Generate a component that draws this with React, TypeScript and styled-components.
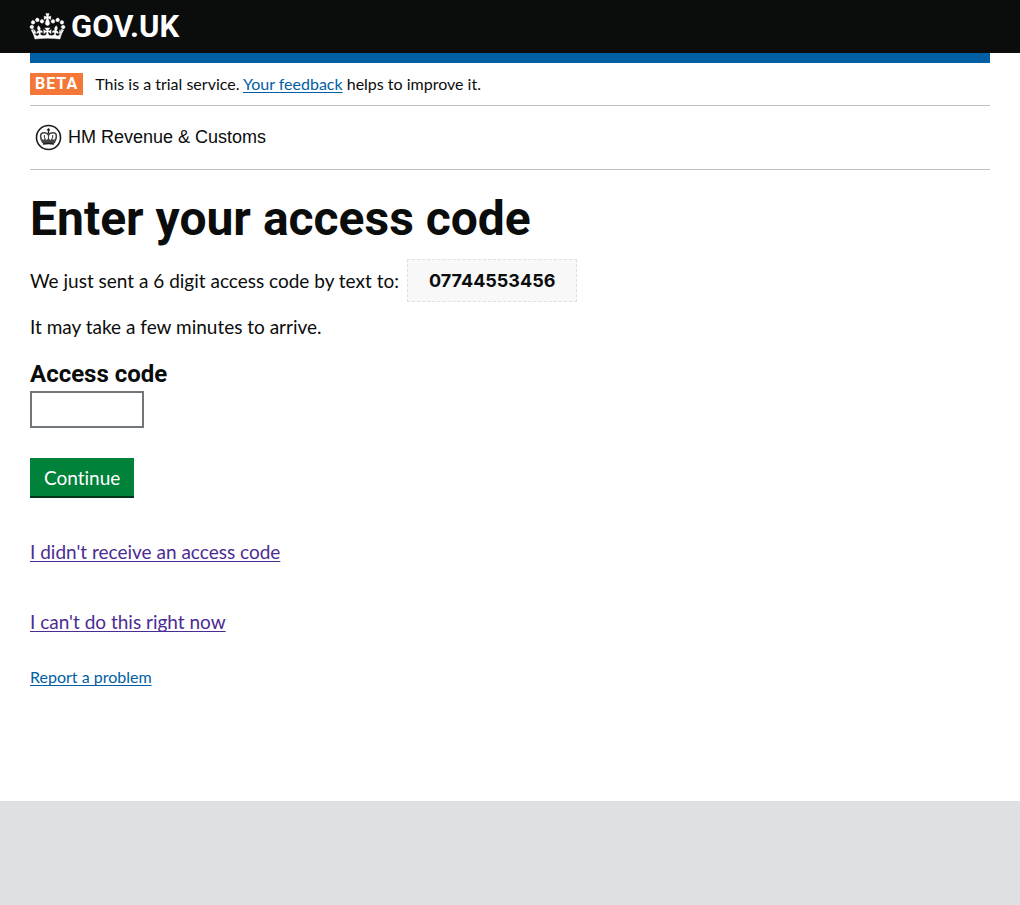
import React from "react";
import styled, { createGlobalStyle } from "styled-components";

const GlobalStyle = createGlobalStyle`
  *, *::before, *::after { box-sizing: border-box; }
  html { background: #dee0e2; }
  body {
    margin: 0;
    background: #dee0e2;
    color: #0b0c0c;
    font-family: Lato, "Liberation Sans", sans-serif;
    font-size: 19px;
    line-height: 25px;
    font-variant-ligatures: none;
  }
  h1, p { margin: 0; }
`;

const Container = styled.div`
  max-width: 960px;
  margin: 0 auto;
  @media (max-width: 1019px) {
    margin: 0 30px;
  }
`;

const Header = styled.header`
  background: #0b0c0c;
`;

const HeaderInner = styled(Container)`
  display: flex;
  align-items: center;
  height: 53px;
`;

const Logo = styled.a`
  display: inline-flex;
  align-items: center;
  gap: 6px;
  color: #fff;
  font-family: Roboto, sans-serif;
  font-size: 31px;
  font-weight: 700;
  line-height: 30px;
  text-decoration: none;
`;

const Content = styled.div`
  background: #fff;
  padding-bottom: 112px;
`;

const BlueBar = styled.div`
  height: 10px;
  background: #005ea5;
`;

const PhaseBanner = styled.div`
  display: flex;
  align-items: center;
  gap: 12px;
  padding: 10px 0;
  border-bottom: 1px solid #bfc1c3;
  font-size: 16px;
  line-height: 22px;
`;

const PhaseTag = styled.strong`
  padding: 0 5px;
  background: #f47738;
  color: #fff;
  font-family: Roboto, sans-serif;
  letter-spacing: 1px;
`;

const Link = styled.a<{ $visited?: boolean }>`
  color: ${(p) => (p.$visited ? "#4c2c92" : "#005ea5")};
  text-decoration: underline;
  text-decoration-thickness: 1px;
  text-underline-offset: 2px;
  text-decoration-skip-ink: none;
`;

const Organisation = styled.div`
  display: flex;
  align-items: center;
  gap: 6px;
  height: 64px;
  padding-left: 5px;
  border-bottom: 1px solid #bfc1c3;
  font-family: "Liberation Sans", Arial, sans-serif;
  font-size: 18px;
`;

const Title = styled.h1`
  padding: 24px 0 15px;
  font-family: Roboto, sans-serif;
  font-size: 48px;
  font-weight: 700;
  line-height: 50px;
`;

const SentLine = styled.p`
  display: flex;
  flex-wrap: wrap;
  align-items: center;
  gap: 8px;
`;

const PhoneNumber = styled.strong`
  padding: 8px 21px;
  border: 1px dashed #dee0e2;
  background: #f8f8f8;
  font-family: Inter, sans-serif;
  font-size: 18px;
`;

const Note = styled.p`
  padding: 12px 0 20px;
`;

const Form = styled.form`
  display: flex;
  flex-direction: column;
  align-items: flex-start;
`;

const Label = styled.label`
  padding-bottom: 2px;
  font-family: Roboto, sans-serif;
  font-size: 24px;
  font-weight: 700;
  line-height: 30px;
`;

const CodeInput = styled.input`
  width: 114px;
  height: 37px;
  margin-bottom: 30px;
  padding: 4px;
  border: 2px solid #6f777b;
  border-radius: 0;
  font: inherit;
`;

const Button = styled.button`
  height: 38px;
  margin-bottom: 43px;
  padding: 0 14px;
  border: 0;
  background: #00823b;
  box-shadow: 0 2px 0 #003618;
  color: #fff;
  font: inherit;
  cursor: pointer;
`;

const HelpLinks = styled.div`
  display: flex;
  flex-direction: column;
  align-items: flex-start;
  gap: 45px;
`;

const Report = styled.p`
  padding-top: 30px;
  font-size: 16px;
`;

const CROWN =
  "M25 30.2c3.5 1.5 7.7-.2 9.1-3.7 1.5-3.6-.2-7.8-3.9-9.2-3.6-1.4-7.6.3-9.1 3.9-1.4 3.5.3 7.5 3.9 9zM9 39.5c3.6 1.5 7.8-.2 9.2-3.7 1.5-3.6-.2-7.8-3.9-9.1-3.6-1.5-7.6.2-9.1 3.8-1.4 3.5.3 7.5 3.8 9zM4.4 57.2c3.5 1.5 7.7-.2 9.1-3.8 1.5-3.6-.2-7.7-3.9-9.1-3.5-1.5-7.6.3-9.1 3.8-1.4 3.5.3 7.6 3.9 9.1zm38.3-21.4c3.5 1.5 7.7-.2 9.1-3.8 1.5-3.6-.2-7.7-3.9-9.1-3.6-1.5-7.6.3-9.1 3.8-1.3 3.6.4 7.7 3.9 9.1zm64.4-5.6c-3.6 1.5-7.8-.2-9.1-3.7-1.5-3.6.2-7.8 3.8-9.2 3.6-1.4 7.7.3 9.2 3.9 1.3 3.5-.4 7.5-3.9 9zm15.9 9.3c-3.6 1.5-7.7-.2-9.1-3.7-1.5-3.6.2-7.8 3.7-9.1 3.6-1.5 7.7.2 9.2 3.8 1.5 3.5-.3 7.5-3.8 9zm4.7 17.7c-3.6 1.5-7.8-.2-9.2-3.8-1.5-3.6.2-7.7 3.9-9.1 3.6-1.5 7.7.3 9.2 3.8 1.3 3.5-.4 7.6-3.9 9.1zM89.3 35.8c-3.6 1.5-7.8-.2-9.2-3.8-1.4-3.6.2-7.7 3.9-9.1 3.6-1.5 7.7.3 9.2 3.8 1.4 3.6-.3 7.7-3.9 9.1zM69.7 17.7l8.9 4.7V9.3l-8.9 2.8c-.2-.3-.5-.6-.9-.9L72.4 0H59.6l3.5 11.2c-.3.3-.6.5-.9.9l-8.8-2.8v13.1l8.8-4.7c.3.3.6.7.9.9l-5 15.4v.1c-.2.8-.4 1.6-.4 2.4 0 4.1 3.1 7.5 7 8.1h.2c.3 0 .7.1 1 .1.4 0 .7 0 1-.1h.2c4-.6 7.1-4.1 7.1-8.1 0-.8-.1-1.7-.4-2.4V34l-5.1-15.4c.4-.2.7-.6 1-.9zM66 92.8c16.9 0 32.8 1.1 47.1 3.2 4-16.9 8.9-26.7 14-33.5l-9.6-3.4c1 4.9 1.1 7.2 0 10.2-1.5-1.4-3-4.3-4.2-8.7L108.6 76c2.8-2 5-3.2 7.5-3.3-4.4 9.4-10 11.9-13.6 11.2-4.3-.8-6.3-4.6-5.6-7.9 1-4.7 5.7-5.9 8-.5 4.3-8.7-3-11.4-7.6-8.8 7.1-7.2 7.9-13.5 2.1-21.1-8 6.1-8.1 12.3-4.5 20.8-4.7-5.4-12.1-2.5-9.5 6.2 3.4-5.2 7.9-2 7.2 3.1-.6 4.3-6.4 7.8-13.5 7.2-10.3-.9-10.9-8-11.2-13.8 2.5-.5 7.1 1.8 11 7.3L80.2 60c-4.1 4.4-8 5.3-12.3 5.4 1.4-4.4 8-11.6 8-11.6H55.5s6.4 7.2 7.9 11.6c-4.2-.1-8-1-12.3-5.4l1.4 16.4c3.9-5.5 8.5-7.7 10.9-7.3-.3 5.8-.9 12.8-11.1 13.8-7.2.6-12.9-2.9-13.5-7.2-.7-5 3.8-8.3 7.1-3.1 2.7-8.7-4.6-11.6-9.4-6.2 3.7-8.5 3.6-14.7-4.6-20.8-5.8 7.6-5 13.9 2.2 21.1-4.7-2.6-11.9.1-7.7 8.8 2.3-5.5 7.1-4.2 8.1.5.7 3.3-1.3 7.1-5.7 7.9-3.5.7-9-1.8-13.5-11.2 2.5.1 4.7 1.3 7.5 3.3l-4.7-15.4c-1.2 4.4-2.7 7.2-4.3 8.7-1.1-3-.9-5.3 0-10.2l-9.5 3.4c5 6.9 9.9 16.7 14 33.5 14.8-2.1 30.8-3.2 47.7-3.2z";

const CrownIcon = () => (
  <svg width="35" height="28" viewBox="0 2 132 97" aria-hidden="true" overflow="visible">
    <path fill="currentColor" stroke="currentColor" strokeWidth="1.5" d={CROWN} />
  </svg>
);

const CrestIcon = () => (
  <svg width="27" height="27" viewBox="0 0 27 27" fill="none" stroke="#1a1a1a" aria-hidden="true">
    <circle cx="13.5" cy="13.5" r="12" strokeWidth="1.6" />
    <path d="M13.5 4.2v5M11.9 5.8h3.2" strokeWidth="1.3" />
    <path
      d="M8 19C7 16.8 5.6 15.4 5.6 12.3c0-2.3 1.6-3.6 3.5-3.6 2 0 3.6.8 4.4 2.3.8-1.5 2.4-2.3 4.4-2.3 1.9 0 3.5 1.3 3.5 3.6 0 3.1-1.4 4.5-2.4 6.7"
      stroke="#444"
      strokeWidth="1.6"
    />
    <path d="M13.5 9v8M9.4 11v3M17.6 11v3" stroke="#444" strokeWidth="1.1" />
    <path d="M7.4 15.4l1.3.8 1.3-2 1.3 2.2 2.2-1.8 2.2 1.8 1.3-2.2 1.3 2 1.3-.8-1 4H8.4z" fill="#444" stroke="#444" strokeWidth=".6" />
    <path d="M8 20c3.6-.6 7.4-.6 11 0" strokeWidth="1.3" />
  </svg>
);

export default function App() {
  return (
    <>
      <GlobalStyle />
      <Header>
        <HeaderInner>
          <Logo href="#">
            <CrownIcon />
            <span>GOV.UK</span>
          </Logo>
        </HeaderInner>
      </Header>
      <Content>
        <Container>
          <BlueBar />
          <PhaseBanner>
            <PhaseTag>BETA</PhaseTag>
            <span>
              This is a trial service. <Link href="#">Your feedback</Link> helps to improve it.
            </span>
          </PhaseBanner>
          <Organisation>
            <CrestIcon />
            <span>HM Revenue &amp; Customs</span>
          </Organisation>
          <main>
            <Title>Enter your access code</Title>
            <SentLine>
              <span>We just sent a 6 digit access code by text to:</span>
              <PhoneNumber>07744553456</PhoneNumber>
            </SentLine>
            <Note>It may take a few minutes to arrive.</Note>
            <Form onSubmit={(event) => event.preventDefault()}>
              <Label htmlFor="access-code">Access code</Label>
              <CodeInput id="access-code" type="text" inputMode="numeric" maxLength={6} />
              <Button type="submit">Continue</Button>
            </Form>
            <HelpLinks>
              <Link $visited href="#">I didn't receive an access code</Link>
              <Link $visited href="#">I can't do this right now</Link>
            </HelpLinks>
            <Report>
              <Link href="#">Report a problem</Link>
            </Report>
          </main>
        </Container>
      </Content>
    </>
  );
}
